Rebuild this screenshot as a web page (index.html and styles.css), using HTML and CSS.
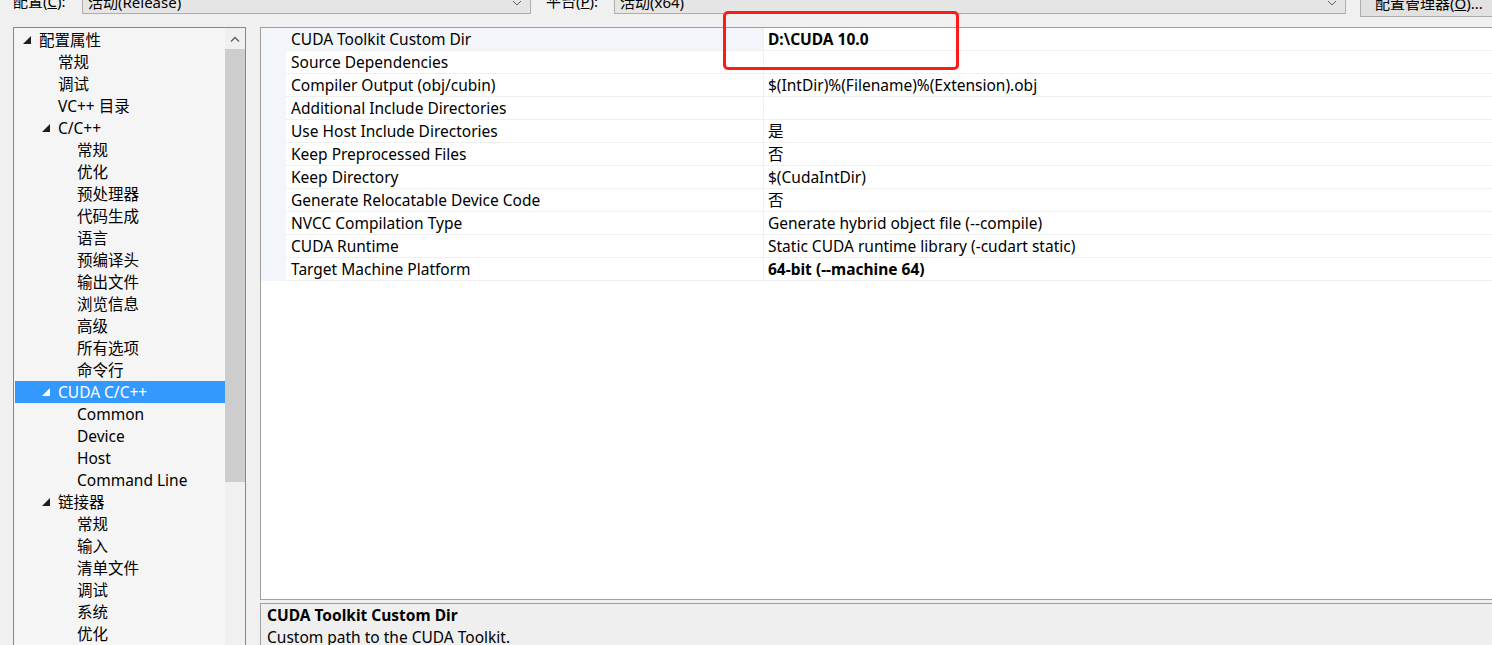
FILE: index.html
```html
<!DOCTYPE html>
<html lang="zh-CN">
<head>
<meta charset="utf-8">
<title>属性页</title>
<link rel="stylesheet" href="styles.css">
</head>
<body>
<div class="topbar">
  <div class="toprow">
    <span class="lbl lbl-cfg">配置(<u>C</u>):</span>
    <div class="combo combo-cfg"><span>活动(Release)</span><svg class="chev" width="10" height="6" viewBox="0 0 10 6"><path d="M1 1 L5 5 L9 1" fill="none" stroke="#606060" stroke-width="1"/></svg></div>
    <span class="lbl lbl-plat">平台(<u>P</u>):</span>
    <div class="combo combo-plat"><span>活动(x64)</span><svg class="chev" width="10" height="6" viewBox="0 0 10 6"><path d="M1 1 L5 5 L9 1" fill="none" stroke="#606060" stroke-width="1"/></svg></div>
    <div class="btn">配置管理器(<u>O</u>)...</div>
  </div>
</div>
<div class="main">
  <div class="tree">
    <div class="tree-list">
      <div class="node l0"><i class="tri"></i>配置属性</div>
      <div class="node l1">常规</div>
      <div class="node l1">调试</div>
      <div class="node l1">VC++ 目录</div>
      <div class="node l1"><i class="tri"></i>C/C++</div>
      <div class="node l2">常规</div>
      <div class="node l2">优化</div>
      <div class="node l2">预处理器</div>
      <div class="node l2">代码生成</div>
      <div class="node l2">语言</div>
      <div class="node l2">预编译头</div>
      <div class="node l2">输出文件</div>
      <div class="node l2">浏览信息</div>
      <div class="node l2">高级</div>
      <div class="node l2">所有选项</div>
      <div class="node l2">命令行</div>
      <div class="node l1 sel"><i class="tri"></i>CUDA C/C++</div>
      <div class="node l2">Common</div>
      <div class="node l2">Device</div>
      <div class="node l2">Host</div>
      <div class="node l2">Command Line</div>
      <div class="node l1"><i class="tri"></i>链接器</div>
      <div class="node l2">常规</div>
      <div class="node l2">输入</div>
      <div class="node l2">清单文件</div>
      <div class="node l2">调试</div>
      <div class="node l2">系统</div>
      <div class="node l2">优化</div>
    </div>
    <div class="vscroll">
      <div class="sb-arrow"><svg width="10" height="6" viewBox="0 0 10 6"><path d="M1 5.5 L5 1.5 L9 5.5" fill="none" stroke="#606060" stroke-width="1.4"/></svg></div>
      <div class="sb-thumb"></div>
    </div>
  </div>
  <div class="right">
    <div class="grid">
      <div class="row"><div class="gut"></div><div class="name cur">CUDA Toolkit Custom Dir</div><div class="val b">D:\CUDA 10.0</div></div>
      <div class="row"><div class="gut"></div><div class="name">Source Dependencies</div><div class="val"></div></div>
      <div class="row"><div class="gut"></div><div class="name">Compiler Output (obj/cubin)</div><div class="val">$(IntDir)%(Filename)%(Extension).obj</div></div>
      <div class="row"><div class="gut"></div><div class="name">Additional Include Directories</div><div class="val"></div></div>
      <div class="row"><div class="gut"></div><div class="name">Use Host Include Directories</div><div class="val">是</div></div>
      <div class="row"><div class="gut"></div><div class="name">Keep Preprocessed Files</div><div class="val">否</div></div>
      <div class="row"><div class="gut"></div><div class="name">Keep Directory</div><div class="val">$(CudaIntDir)</div></div>
      <div class="row"><div class="gut"></div><div class="name">Generate Relocatable Device Code</div><div class="val">否</div></div>
      <div class="row"><div class="gut"></div><div class="name">NVCC Compilation Type</div><div class="val">Generate hybrid object file (--compile)</div></div>
      <div class="row"><div class="gut"></div><div class="name">CUDA Runtime</div><div class="val">Static CUDA runtime library (-cudart static)</div></div>
      <div class="row"><div class="gut"></div><div class="name">Target Machine Platform</div><div class="val b">64-bit (--machine 64)</div></div>
    </div>
    <div class="desc">
      <div class="desc-title">CUDA Toolkit Custom Dir</div>
      <div class="desc-text">Custom path to the CUDA Toolkit.</div>
    </div>
  </div>
</div>
<div class="highlight"></div>
</body>
</html>
```
FILE: styles.css
```css
html, body {
  margin: 0;
  padding: 0;
}
body {
  width: 1492px;
  height: 645px;
  overflow: hidden;
  background: #f0f0f0;
  font-family: "Segoe UI", "Noto Sans", "Noto Sans CJK SC", sans-serif;
  font-size: 15.5px;
  color: #000;
  position: relative;
}
u { text-decoration: underline; }

.topbar {
  height: 27px;
  display: flex;
  align-items: flex-start;
}
.toprow {
  display: flex;
  align-items: flex-start;
  margin-top: -10px;
  padding-left: 13px;
}
.lbl {
  line-height: 23px;
  white-space: nowrap;
  font-size: 15px;
}
.lbl-cfg { width: 69px; }
.lbl-plat { width: 68px; margin-left: 15px; }
.combo {
  box-sizing: border-box;
  height: 24px;
  background: #e5e5e5;
  border: 1px solid #adadad;
  display: flex;
  align-items: center;
  justify-content: space-between;
  padding: 0 8px 0 5px;
  line-height: 22px;
  font-size: 15px;
}
.combo-cfg { width: 449px; }
.combo-plat { width: 732px; }
.chev { margin-top: 2px; }
.btn {
  box-sizing: border-box;
  margin-left: 14px;
  width: 150px;
  height: 27px;
  background: #e1e1e1;
  border: 1px solid #adadad;
  padding-left: 14px;
  line-height: 25px;
  white-space: nowrap;
  font-size: 15px;
}

.main {
  display: flex;
  gap: 14px;
  padding-left: 13px;
  height: 618px;
}
.tree {
  box-sizing: border-box;
  width: 233px;
  height: 640px;
  border: 1px solid #828790;
  background: #f5f5f5;
  display: flex;
  flex: none;
}
.tree-list {
  flex: 1;
  padding: 1px 0 0 1px;
}
.node {
  height: 22px;
  line-height: 22px;
  display: flex;
  align-items: center;
  white-space: nowrap;
  position: relative;
}
.node.l0 { padding-left: 24px; }
.node.l1 { padding-left: 43px; }
.node.l2 { padding-left: 62px; }
.node.sel {
  background: #3399ff;
  color: #fff;
}
.tri {
  position: absolute;
  top: 7px;
  width: 0;
  height: 0;
  border-left: 8px solid transparent;
  border-bottom: 8px solid #1e1e1e;
}
.l0 .tri { left: 8px; }
.l1 .tri { left: 27px; }
.sel .tri { border-bottom-color: #fff; }

.vscroll {
  width: 20px;
  background: #f0f0f0;
  display: flex;
  flex-direction: column;
}
.sb-arrow {
  height: 21px;
  display: flex;
  align-items: center;
  justify-content: center;
}
.sb-thumb {
  height: 433px;
  background: #cdcdcd;
}

.right {
  flex: 1;
  margin-right: -20px;
  display: flex;
  flex-direction: column;
}
.grid {
  box-sizing: border-box;
  height: 573px;
  flex: none;
  border: 1px solid #a0a0a0;
  background: #fff;
}
.row {
  display: flex;
  height: 23px;
}
.gut {
  width: 25px;
  flex: none;
  background: #f2f5fa;
}
.name, .val {
  box-sizing: border-box;
  height: 23px;
  padding-top: 1px;
  line-height: 21px;
  border-bottom: 1px solid #f0f0f0;
  white-space: nowrap;
}
.name {
  width: 477px;
  flex: none;
  padding-left: 5px;
}
.name.cur { background: #f2f5fa; }
.val {
  flex: 1;
  padding-left: 4px;
  border-left: 1px solid #f0f0f0;
}
.b { font-weight: bold; }

.desc {
  margin-top: 3px;
  flex: none;
  height: 60px;
  border-top: 1px solid #a0a0a0;
  border-left: 1px solid #a0a0a0;
  background: #efefef;
  padding-left: 6px;
}
.desc-title {
  line-height: 22px;
  font-weight: bold;
}
.desc-text {
  line-height: 22px;
}

.highlight {
  position: absolute;
  left: 723px;
  top: 11px;
  width: 236px;
  height: 59px;
  box-sizing: border-box;
  border: 3px solid #ff1a1a;
  border-radius: 5px;
}
```
